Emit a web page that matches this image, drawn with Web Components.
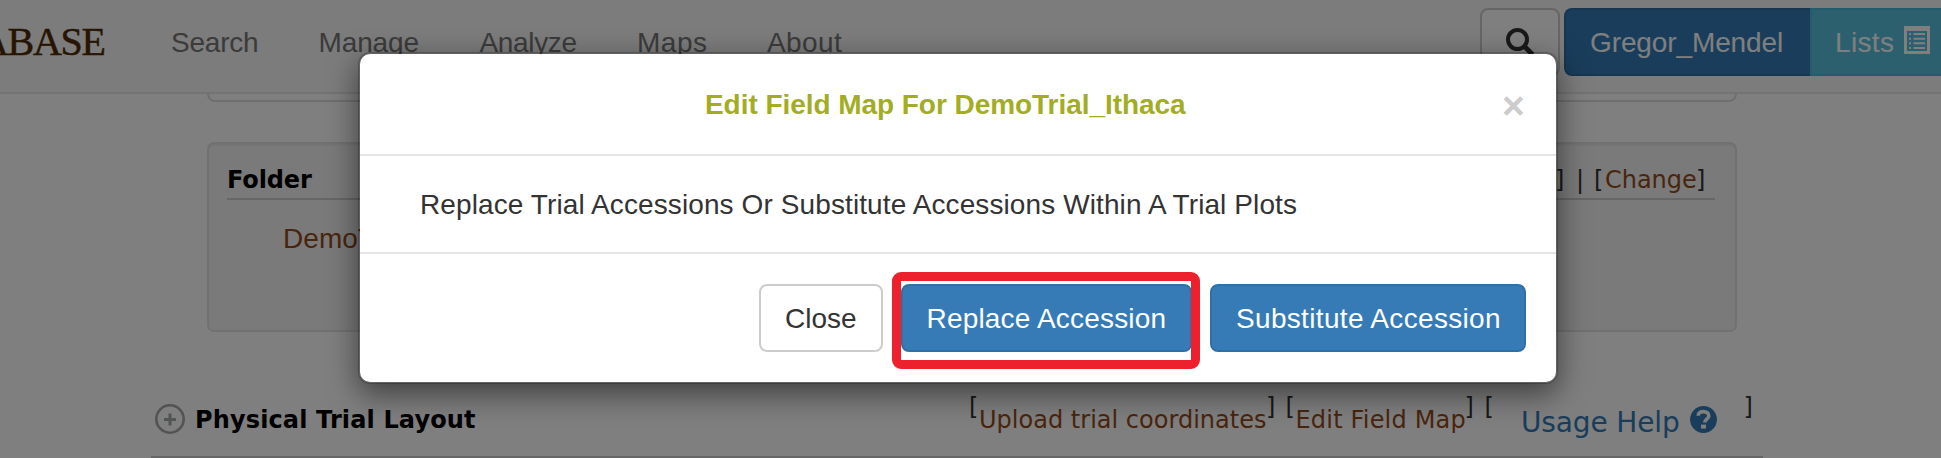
<!DOCTYPE html>
<html lang="en">
<head>
<meta charset="utf-8">
<title>Edit Field Map</title>
<style>
html,body{margin:0;padding:0;width:1941px;height:458px;overflow:hidden;background:#fff}
</style>
</head>
<body>
<trial-page></trial-page>
<script>
const SANS = "'Liberation Sans', Arial, sans-serif";
const VERD = "'DejaVu Sans', Verdana, sans-serif";

// One line of text tracked so that its ink spans exactly the width in "w".
customElements.define('fit-text', class extends HTMLElement {
  connectedCallback() {
    if (this.shadowRoot) return;
    this.attachShadow({mode: 'open'}).innerHTML = `<style>
      :host{display:block;flex:none;white-space:pre;line-height:42px;height:40px}
      span{display:inline-block;vertical-align:top}
    </style><span><slot></slot></span>`;
    const text = this.textContent, w = +this.getAttribute('w'), cs = getComputedStyle(this);
    const c = document.createElement('canvas').getContext('2d');
    c.font = `${cs.fontWeight} ${cs.fontSize} ${cs.fontFamily}`;
    const m = c.measureText(text);
    const span = this.shadowRoot.querySelector('span');
    const n = text.length;
    this.style.width = w + 'px';
    if (n > 1) {
      span.style.letterSpacing = '0.01px';
      const natural = span.getBoundingClientRect().width - 0.01 * n;
      const ink = natural + m.actualBoundingBoxLeft - (m.width - m.actualBoundingBoxRight);
      span.style.letterSpacing = (w - ink) / (n - 1) + 'px';
    }
    span.style.marginLeft = m.actualBoundingBoxLeft + 'px';
  }
});

customElements.define('site-nav', class extends HTMLElement {
  constructor() {
    super();
    this.attachShadow({mode: 'open'}).innerHTML = `<style>
      :host{display:flex;align-items:flex-start;height:92px;background:#f8f8f8;border-bottom:2px solid #e7e7e7;
        font:28px ${SANS};color:#777;overflow:hidden}
      .brand{font-family:'Liberation Serif',serif;font-size:40px;color:#4e2a05;-webkit-text-stroke:.5px #4e2a05;margin:21px 0 0 -20px}
      .i{margin-top:22px}
      .b{box-sizing:border-box;height:68px;margin-top:8px;border:2px solid;display:flex;flex:none}
      .b fit-text{margin-top:12px}
      .s{width:80px;margin-left:638px;background:#fff;border-color:#ccc;border-radius:8px}
      .s svg{margin:18px 0 0 24px}
      .g{width:246px;margin-left:4px;background:#337ab7;border-color:#2e6da4;border-radius:8px 0 0 8px;color:#fff;border-right:0}
      .g fit-text{margin-left:25px}
      .l{width:160px;background:#5bc0de;border-color:#46b8da;color:#fff}
      .l fit-text{margin-left:25px}
      .l svg{margin:16px 0 0 11px;flex:none}
    </style>
    <fit-text class="brand" w="124.5">ABASE</fit-text>
    <fit-text class="i" style="margin-left:67.5px" w="85">Search</fit-text>
    <fit-text class="i" style="margin-left:63.5px" w="98">Manage</fit-text>
    <fit-text class="i" style="margin-left:61px" w="97">Analyze</fit-text>
    <fit-text class="i" style="margin-left:62.5px" w="67">Maps</fit-text>
    <fit-text class="i" style="margin-left:61px" w="75">About</fit-text>
    <div class="b s"><svg width="30" height="30" viewBox="0 0 30 30" fill="none" stroke="#333"><circle cx="11.5" cy="11.5" r="9.5" stroke-width="4"/><path d="M18.5 18.5l8 8" stroke-width="5"/></svg></div>
    <div class="b g"><fit-text w="191">Gregor_Mendel</fit-text></div>
    <div class="b l"><fit-text w="56">Lists</fit-text><svg width="26" height="28" viewBox="0 0 26 28" fill="#fff"><path fill-rule="evenodd" d="M0 0h26v28H0zM3 5v20h20V5z"/><path d="M5 7h2v2H5zM9.5 7H21v2H9.5zM5 11.7h2v2H5zM9.5 11.7H21v2H9.5zM5 16.3h2v2H5zM9.5 16.3H21v2H9.5zM5 21h2v2H5zM9.5 21H21v2H9.5z"/></svg></div>`;
  }
});

customElements.define('folder-panel', class extends HTMLElement {
  constructor() {
    super();
    this.attachShadow({mode: 'open'}).innerHTML = `<style>
      :host{display:block;box-sizing:border-box;height:190px;margin:40px 204px 0 207px;border:2px solid #e3e3e3;
        border-radius:7px;background:#f5f5f5;box-shadow:inset 0 2px 2px rgba(0,0,0,.05);font:24px ${VERD};color:#333;padding:0 20px 0 18px}
      .h{display:flex;height:54px;border-bottom:2px solid #ccc}
      .h fit-text{margin-top:15px}
      .d{font-family:${SANS};font-size:28px;color:#954a1a;margin:18px 0 0 58px}
    </style>
    <div class="h"><fit-text style="margin-left:2px;font-weight:bold;color:#000" w="83">Folder</fit-text>
      <fit-text style="margin-left:1245px" w="7">]</fit-text>
      <fit-text style="margin-left:15px" w="2">|</fit-text>
      <fit-text style="margin-left:15px" w="7">[</fit-text>
      <fit-text style="margin-left:3px;color:#954a1a" w="90">Change</fit-text>
      <fit-text style="margin-left:2px" w="7">]</fit-text></div>
    <fit-text class="d" w="90">DemoT</fit-text>`;
  }
});

customElements.define('layout-header', class extends HTMLElement {
  constructor() {
    super();
    this.attachShadow({mode: 'open'}).innerHTML = `<style>
      :host{display:flex;box-sizing:border-box;height:74px;margin:52px 178px 0 151px;border-bottom:2px solid #ccc;
        font:24px ${VERD};color:#333;padding-top:15px}
      svg{flex:none}
      .k{color:#954a1a}
      .u{margin-top:-13px}
      .t{font-weight:bold;color:#000}
    </style>
    <svg width="30" height="30" style="margin:5px 0 0 4px" fill="none" stroke="#a3a8a6"><circle cx="15" cy="15" r="13.7" stroke-width="2.6"/><path d="M9 15.5h12M15 9.5v12" stroke-width="3"/></svg>
    <fit-text class="t" style="margin-left:12px" w="278">Physical Trial Layout</fit-text>
    <fit-text class="u" style="margin-left:496px" w="7">[</fit-text>
    <fit-text class="k" style="margin-left:3px" w="285">Upload trial coordinates</fit-text>
    <fit-text class="u" style="margin-left:2px" w="7">]</fit-text>
    <fit-text class="u" style="margin-left:12.5px" w="7">[</fit-text>
    <fit-text class="k" style="margin-left:3px" w="167">Edit Field Map</fit-text>
    <fit-text class="u" style="margin-left:2px" w="7">]</fit-text>
    <fit-text class="u" style="margin-left:13px" w="7">[</fit-text>
    <fit-text style="margin:3px 0 0 29.5px;font-size:28px;color:#337ab7" w="156">Usage Help</fit-text>
    <svg width="27" height="27" viewBox="0 0 27 27" style="margin:7px 0 0 11px"><circle cx="13.5" cy="13.5" r="13.4" fill="#337ab7"/><path d="M8.2 9.8C8.2 6.6 10.400 5.600 13.500 5.600s5.300 1.600 5.300 4.400c0 3.200-4 3.200-4 6.400" fill="none" stroke="#fff" stroke-width="3.6"/><path d="M11 18.6h5v4h-5z" fill="#fff"/></svg>
    <fit-text class="u" style="margin-left:28.5px" w="7">]</fit-text>`;
  }
});

customElements.define('ui-button', class extends HTMLElement {
  constructor() {
    super();
    this.attachShadow({mode: 'open'}).innerHTML = `<style>
      :host{display:flex;justify-content:center;box-sizing:border-box;height:68px;flex:none;border:2px solid #3070a5;border-radius:8px;
        background:#367bb5;color:#fff;padding-top:12px}
      :host([plain]){background:#fff;border-color:#ccc;color:#333}
    </style><slot></slot>`;
  }
});

customElements.define('edit-dialog', class extends HTMLElement {
  constructor() {
    super();
    this.attachShadow({mode: 'open'}).innerHTML = `<style>
      :host{display:block;position:absolute;left:358px;top:52px;width:1196px;height:328px;background:#fff;background-clip:padding-box;
        border:2px solid rgba(0,0,0,.2);border-radius:12px;box-shadow:0 10px 30px rgba(0,0,0,.5);font:28px ${SANS};color:#333}
      .h{display:flex;height:100px;border-bottom:2px solid #e5e5e5}
      .x{font-weight:bold;font-size:39px;color:#ccc;margin:31px 0 0 317px}
      .m{display:flex;height:96px;border-bottom:2px solid #e5e5e5}
      .f{display:flex;justify-content:flex-end;padding:30px 30px 0 0}
      .f ui-button{margin-left:18px}
      .mark{position:absolute;box-sizing:border-box;left:532px;top:218px;width:308px;height:97px;border:9px solid #ec212d;border-radius:9px}
    </style>
    <div class="h"><fit-text style="font-weight:bold;color:#a2ad24;margin:30px 0 0 346px" w="480">Edit Field Map For DemoTrial_Ithaca</fit-text>
      <fit-text class="x" w="19">×</fit-text></div>
    <div class="m"><fit-text style="margin:28px 0 0 62px" w="874">Replace Trial Accessions Or Substitute Accessions Within A Trial Plots</fit-text></div>
    <div class="f">
      <ui-button plain style="width:124px"><fit-text w="70">Close</fit-text></ui-button>
      <ui-button style="width:291px"><fit-text w="236">Replace Accession</fit-text></ui-button>
      <ui-button style="width:316px"><fit-text w="262">Substitute Accession</fit-text></ui-button>
    </div>
    <div class="mark"></div>`;
  }
});

customElements.define('trial-page', class extends HTMLElement {
  constructor() {
    super();
    this.attachShadow({mode: 'open'}).innerHTML = `<style>
      :host{display:block;position:relative;width:1941px;height:458px;overflow:hidden;background:#fff}
      .prev{box-sizing:border-box;height:8px;margin:0 204px 0 207px;border:2px solid #ddd;border-top:0;border-radius:0 0 8px 8px}
      .scrim{position:absolute;inset:0;background:rgba(0,0,0,.5)}
    </style>
    <site-nav></site-nav><div class="prev"></div><folder-panel></folder-panel><layout-header></layout-header>
    <div class="scrim"></div><edit-dialog></edit-dialog>`;
  }
});
</script>
</body>
</html>
